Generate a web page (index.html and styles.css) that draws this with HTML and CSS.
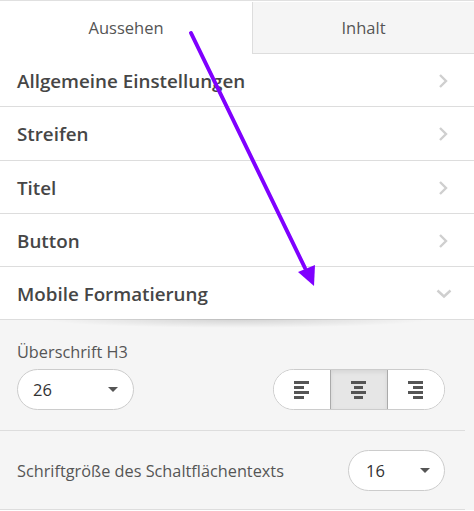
FILE: index.html
```html
<!DOCTYPE html>
<html lang="de">
<head>
  <meta charset="UTF-8" />
  <meta name="viewport" content="width=device-width, initial-scale=1.0" />
  <title>Einstellungen</title>
  <link rel="stylesheet" href="styles.css">
</head>
<body>
  <div class="panel">
    <div class="tabs">
      <div class="tab active">Aussehen</div>
      <div class="tab">Inhalt</div>
    </div>

    <div class="section">
      <span>Allgemeine Einstellungen</span>
      <svg class="chevron" width="10" height="16" viewBox="0 0 10 16"><path d="M2 2l6 6-6 6" fill="none" stroke="#cfcfcf" stroke-width="2.4"/></svg>
    </div>
    <div class="section">
      <span>Streifen</span>
      <svg class="chevron" width="10" height="16" viewBox="0 0 10 16"><path d="M2 2l6 6-6 6" fill="none" stroke="#cfcfcf" stroke-width="2.4"/></svg>
    </div>
    <div class="section">
      <span>Titel</span>
      <svg class="chevron" width="10" height="16" viewBox="0 0 10 16"><path d="M2 2l6 6-6 6" fill="none" stroke="#cfcfcf" stroke-width="2.4"/></svg>
    </div>
    <div class="section">
      <span>Button</span>
      <svg class="chevron" width="10" height="16" viewBox="0 0 10 16"><path d="M2 2l6 6-6 6" fill="none" stroke="#cfcfcf" stroke-width="2.4"/></svg>
    </div>
    <div class="section open">
      <span>Mobile Formatierung</span>
      <svg class="chevron down" width="16" height="10" viewBox="0 0 16 10"><path d="M1.5 1.5l6.5 6 6.5-6" fill="none" stroke="#cfcfcf" stroke-width="2.4"/></svg>
    </div>

    <div class="content">
      <div class="field">
        <label>Überschrift H3</label>
        <div class="field-row">
          <div class="select wide"><span>26</span><i class="caret"></i></div>
          <div class="align-group">
            <button class="align-btn">
              <svg width="16" height="18" viewBox="0 0 16 18"><rect x="0" y="0" width="15" height="3"/><rect x="0" y="5" width="10" height="3"/><rect x="0" y="10" width="15" height="3"/><rect x="0" y="15" width="10" height="3"/></svg>
            </button>
            <button class="align-btn selected">
              <svg width="16" height="18" viewBox="0 0 16 18"><rect x="0" y="0" width="15" height="3"/><rect x="3" y="5" width="9" height="3"/><rect x="0" y="10" width="15" height="3"/><rect x="3" y="15" width="9" height="3"/></svg>
            </button>
            <button class="align-btn">
              <svg width="16" height="18" viewBox="0 0 16 18"><rect x="0" y="0" width="15" height="3"/><rect x="5" y="5" width="10" height="3"/><rect x="0" y="10" width="15" height="3"/><rect x="5" y="15" width="10" height="3"/></svg>
            </button>
          </div>
        </div>
      </div>

      <div class="field inline">
        <label>Schriftgröße des Schaltflächentexts</label>
        <div class="select narrow"><span>16</span><i class="caret"></i></div>
      </div>
    </div>
  </div>

  <!-- annotation arrow drawn over the screenshot -->
  <svg class="annotation" width="474" height="511" viewBox="0 0 474 511">
    <line x1="191" y1="33" x2="305" y2="268" stroke="#7f00ff" stroke-width="4" stroke-linecap="round"/>
    <polygon points="314,286 298,272 315,265" fill="#7f00ff"/>
  </svg>
</body>
</html>
```

FILE: styles.css
```css
body {
  margin: 0;
  font-family: 'Open Sans', 'Noto Sans', sans-serif;
  color: #444;
  background: #fff;
}

.panel {
  width: 474px;
  border-top: 1px solid #e0e0e0;
}

.tabs {
  display: flex;
  height: 53px;
}

.tab {
  flex: 1;
  display: flex;
  align-items: center;
  justify-content: center;
  font-size: 16.5px;
  color: #555;
  background: #f5f5f5;
  border-left: 1px solid #ddd;
  border-bottom: 1px solid #ddd;
  margin-top: 1px;
}

.tab.active {
  flex: none;
  width: 252px;
  background: #fff;
  border: none;
  margin-top: 0;
}

.section {
  display: flex;
  align-items: center;
  justify-content: space-between;
  box-sizing: border-box;
  height: 53.25px;
  padding: 2px 26px 0 17px;
  border-bottom: 1px solid #ddd;
  font-size: 18.8px;
  font-weight: 600;
  color: #464646;
  position: relative;
  background: #fff;
}

.section .chevron.down {
  margin-right: -4px;
}

.section.open::after {
  content: '';
  position: absolute;
  left: 40px;
  right: 40px;
  bottom: -9px;
  height: 9px;
  background: radial-gradient(ellipse at top, rgba(0, 0, 0, 0.14), rgba(0, 0, 0, 0) 70%);
}

.content {
  background: #f5f5f5;
  padding-right: 9px;
}

.field {
  padding: 22px 20px 20px 17px;
  border-bottom: 1px solid #ddd;
}

.field label {
  display: block;
  font-size: 16.3px;
  line-height: 20px;
  color: #555;
  margin-bottom: 7px;
}

.field-row {
  display: flex;
  justify-content: space-between;
  align-items: center;
}

.field.inline {
  display: flex;
  justify-content: space-between;
  align-items: center;
  padding-top: 19px;
  padding-bottom: 18px;
}

.field.inline label {
  margin: 0;
}

.select {
  box-sizing: border-box;
  height: 41px;
  border: 1px solid #ccc;
  border-radius: 21px;
  background: #fff;
  display: flex;
  align-items: center;
  justify-content: space-between;
  padding: 0 15px;
  font-size: 16.5px;
  color: #333;
}

.select.wide {
  width: 117px;
}

.select.narrow {
  width: 97px;
  padding-left: 17px;
  padding-right: 14px;
}

.caret {
  width: 0;
  height: 0;
  border-left: 5px solid transparent;
  border-right: 5px solid transparent;
  border-top: 5px solid #555;
}

.align-group {
  display: flex;
  height: 41px;
  box-sizing: border-box;
  border: 1px solid #ccc;
  border-radius: 21px;
  background: #fff;
  overflow: hidden;
}

.align-btn {
  width: 56px;
  border: none;
  background: #fff;
  padding: 0;
  display: flex;
  align-items: center;
  justify-content: center;
}

.align-btn svg {
  fill: #555;
}

.align-btn.selected {
  width: 58px;
  background: #e6e6e6;
  border: 1px solid #aaa;
  margin: -1px 0;
  box-shadow: inset 0 2px 4px rgba(0, 0, 0, 0.08);
}

.annotation {
  position: absolute;
  top: 0;
  left: 0;
  pointer-events: none;
}
```
